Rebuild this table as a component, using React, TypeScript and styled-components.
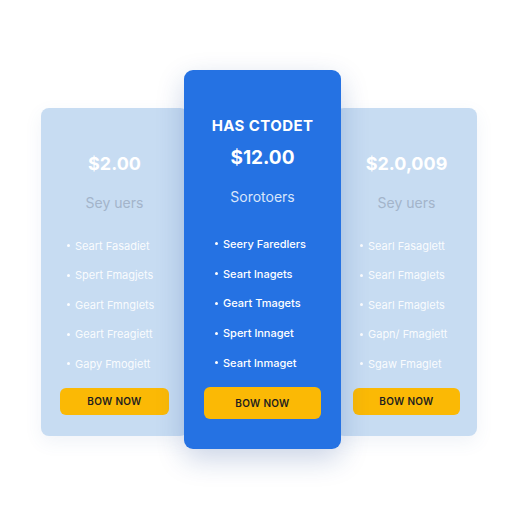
import React from "react";
import styled, { createGlobalStyle } from "styled-components";

const GlobalStyle = createGlobalStyle`
	html, body {
		margin: 0;
		padding: 0;
		background: #ffffff;
		font-family: "Inter", "Liberation Sans", sans-serif;
	}
`;

interface IPlan {
	title?: string;
	price: string;
	subtitle: string;
	features: string[];
}

const Page = styled.div`
	display: flex;
	align-items: flex-start;
	box-sizing: border-box;
	width: 512px;
	height: 512px;
	padding: 70px 0 0 41px;
`;

const SideCard = styled.div<{ side: "left" | "right" }>`
	display: flex;
	flex-direction: column;
	align-items: center;
	box-sizing: border-box;
	width: ${(p) => (p.side === "left" ? 147 : 141)}px;
	height: 328px;
	margin-top: 38px;
	margin-left: ${(p) => (p.side === "right" ? -5 : 0)}px;
	margin-right: ${(p) => (p.side === "left" ? -4 : 0)}px;
	padding: 44px ${(p) => (p.side === "left" ? 19 : 17)}px 19px;
	background: #c7dcf2;
	border-radius: 8px;
	box-shadow: 0 6px 18px rgba(60, 100, 160, 0.08);
	z-index: 1;
`;

const MainCard = styled.div`
	display: flex;
	flex-direction: column;
	align-items: center;
	box-sizing: border-box;
	width: 157px;
	height: 379px;
	padding: 46px 20px 30px;
	background: #2572e3;
	border-radius: 9px;
	box-shadow: 0 10px 28px rgba(20, 60, 140, 0.22);
	z-index: 2;
`;

const Title = styled.div`
	font-size: 15px;
	line-height: 20px;
	font-weight: 700;
	letter-spacing: 0.4px;
	color: #ffffff;
`;

const Price = styled.div<{ featured?: boolean }>`
	margin-top: ${(p) => (p.featured ? 10 : 0)}px;
	font-size: ${(p) => (p.featured ? 19 : 18)}px;
	line-height: 24px;
	font-weight: 700;
	color: #ffffff;
`;

const Subtitle = styled.div<{ featured?: boolean }>`
	margin-top: 17px;
	font-size: 14px;
	line-height: 20px;
	color: ${(p) => (p.featured ? "#d9e6fb" : "#a3b4ca")};
`;

const Features = styled.ul<{ featured?: boolean }>`
	align-self: stretch;
	list-style: none;
	margin: ${(p) => (p.featured ? "22px 0 0" : "18px 0 0")};
	padding: 0 0 0 ${(p) => (p.featured ? 11 : 7)}px;
`;

const Feature = styled.li<{ featured?: boolean }>`
	display: flex;
	align-items: center;
	gap: 5px;
	height: ${(p) => (p.featured ? 29.75 : 29.5)}px;
	font-size: 11px;
	font-weight: ${(p) => (p.featured ? 500 : 400)};
	color: ${(p) => (p.featured ? "#ffffff" : "rgba(255,255,255,0.92)")};
	white-space: nowrap;

	&::before {
		content: "";
		width: 3px;
		height: 3px;
		border-radius: 50%;
		background: currentColor;
	}
`;

const BuyButton = styled.button<{ featured?: boolean }>`
	align-self: stretch;
	margin-top: 9px;
	height: ${(p) => (p.featured ? 32 : 27)}px;
	border: none;
	border-radius: 6px;
	background: #fbb905;
	font-family: inherit;
	font-size: 10px;
	font-weight: 600;
	letter-spacing: 0.3px;
	color: #1f1f1f;
	cursor: pointer;
`;

const leftPlan: IPlan = {
	price: "$2.00",
	subtitle: "Sey uers",
	features: [
		"Seart Fasadiet",
		"Spert Fmagjets",
		"Geart Fmnglets",
		"Geart Freagiett",
		"Gapy Fmogiett",
	],
};

const mainPlan: IPlan = {
	title: "HAS CTODET",
	price: "$12.00",
	subtitle: "Sorotoers",
	features: [
		"Seery Faredlers",
		"Seart lnagets",
		"Geart Tmagets",
		"Spert lnnaget",
		"Seart lnmaget",
	],
};

const rightPlan: IPlan = {
	price: "$2.0,009",
	subtitle: "Sey uers",
	features: [
		"Searl Fasaglett",
		"Searl Fmaglets",
		"Searl Fmaglets",
		"Gapn/ Fmagiett",
		"Sgaw Fmaglet",
	],
};

const SidePlan = (props: { plan: IPlan; side: "left" | "right" }) => {
	return (
		<SideCard side={props.side}>
			<Price>{props.plan.price}</Price>
			<Subtitle>{props.plan.subtitle}</Subtitle>
			<Features>
				{props.plan.features.map((f, i) => (
					<Feature key={i}>{f}</Feature>
				))}
			</Features>
			<BuyButton>BOW NOW</BuyButton>
		</SideCard>
	);
};

const App = () => {
	return (
		<>
			<GlobalStyle />
			<Page>
				<SidePlan plan={leftPlan} side="left" />
				<MainCard>
					<Title>{mainPlan.title}</Title>
					<Price featured>{mainPlan.price}</Price>
					<Subtitle featured>{mainPlan.subtitle}</Subtitle>
					<Features featured>
						{mainPlan.features.map((f, i) => (
							<Feature featured key={i}>
								{f}
							</Feature>
						))}
					</Features>
					<BuyButton featured>BOW NOW</BuyButton>
				</MainCard>
				<SidePlan plan={rightPlan} side="right" />
			</Page>
		</>
	);
};

export default App;
